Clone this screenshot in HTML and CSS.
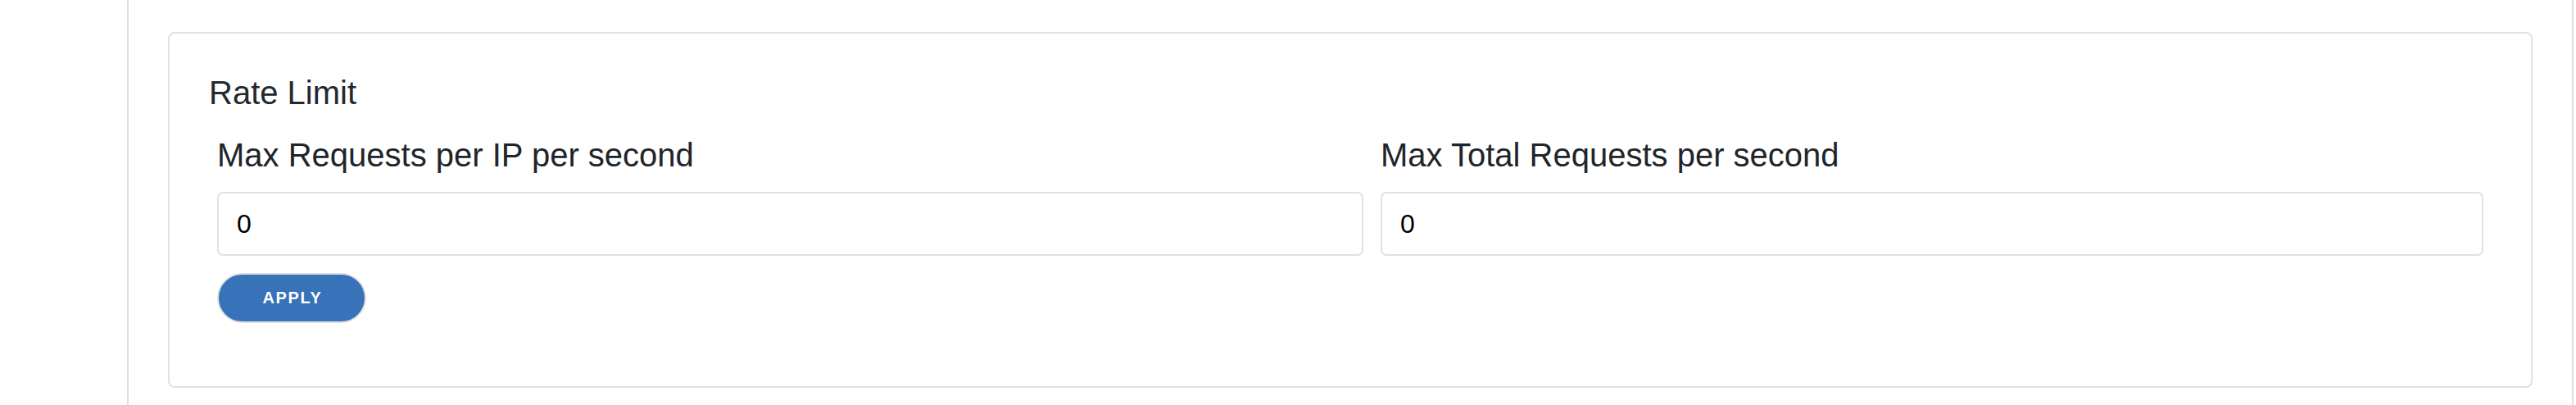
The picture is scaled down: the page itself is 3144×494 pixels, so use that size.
FILE: index.html
```html
<!DOCTYPE html>
<html lang="en">
<head>
<meta charset="utf-8">
<title>Rate Limit</title>
<link rel="stylesheet" href="styles.css">
</head>
<body>
<div class="layout">
  <aside class="sidebar"></aside>
  <main class="main">
    <section class="card">
      <h2 class="card-title">Rate Limit</h2>
      <form class="form">
        <div class="fields">
          <div class="field">
            <label class="field-label" for="perip">Max Requests per IP per second</label>
            <input class="field-input" id="perip" type="text" value="0">
          </div>
          <div class="field">
            <label class="field-label" for="total">Max Total Requests per second</label>
            <input class="field-input" id="total" type="text" value="0">
          </div>
        </div>
        <button class="btn" type="button">APPLY</button>
      </form>
    </section>
  </main>
</div>
</body>
</html>
```
FILE: styles.css
```css
* { box-sizing: border-box; }

html, body {
  margin: 0;
  padding: 0;
  background: #ffffff;
}

body {
  font-family: "Liberation Sans", Arial, Helvetica, sans-serif;
  color: #212529;
}

.layout {
  display: flex;
  min-height: 494px;
}

.sidebar {
  flex: 0 0 157px;
  border-right: 2px solid #dedede;
}

.main {
  flex: 1 1 auto;
  padding: 39px 48px 0 48px;
  border-right: 2px solid #dedede;
  margin-right: 3px;
}

.card {
  border: 2px solid #e2e2e2;
  border-radius: 8px;
  padding: 48px 48px 77px 48px;
  background: #ffffff;
}

.card-title {
  margin: 0 0 28px 0;
  font-size: 40px;
  line-height: 48px;
  font-weight: normal;
  color: #23292e;
}

.form {
  margin: 0 10px;
}

.fields {
  display: grid;
  grid-template-columns: 1399fr 1346fr;
  column-gap: 21px;
}

.field {
  display: flex;
  flex-direction: column;
}

.field-label {
  font-size: 40px;
  line-height: 48px;
  color: #212529;
  margin-bottom: 21px;
}

.field-input {
  height: 78px;
  width: 100%;
  border: 2px solid #e2e2e2;
  border-radius: 7px;
  padding: 0 22px;
  font-family: "Liberation Sans", Arial, Helvetica, sans-serif;
  font-size: 32px;
  color: #000000;
  background: #ffffff;
  outline: none;
}

.btn {
  display: block;
  margin-top: 21px;
  width: 182px;
  height: 61px;
  border: 2px solid #e0e0e0;
  border-radius: 31px;
  background: #3872b8;
  color: #ffffff;
  font-family: "Liberation Sans", Arial, Helvetica, sans-serif;
  font-weight: bold;
  font-size: 20px;
  letter-spacing: 1.6px;
  padding: 0 0 0 2px;
  cursor: pointer;
}
```
